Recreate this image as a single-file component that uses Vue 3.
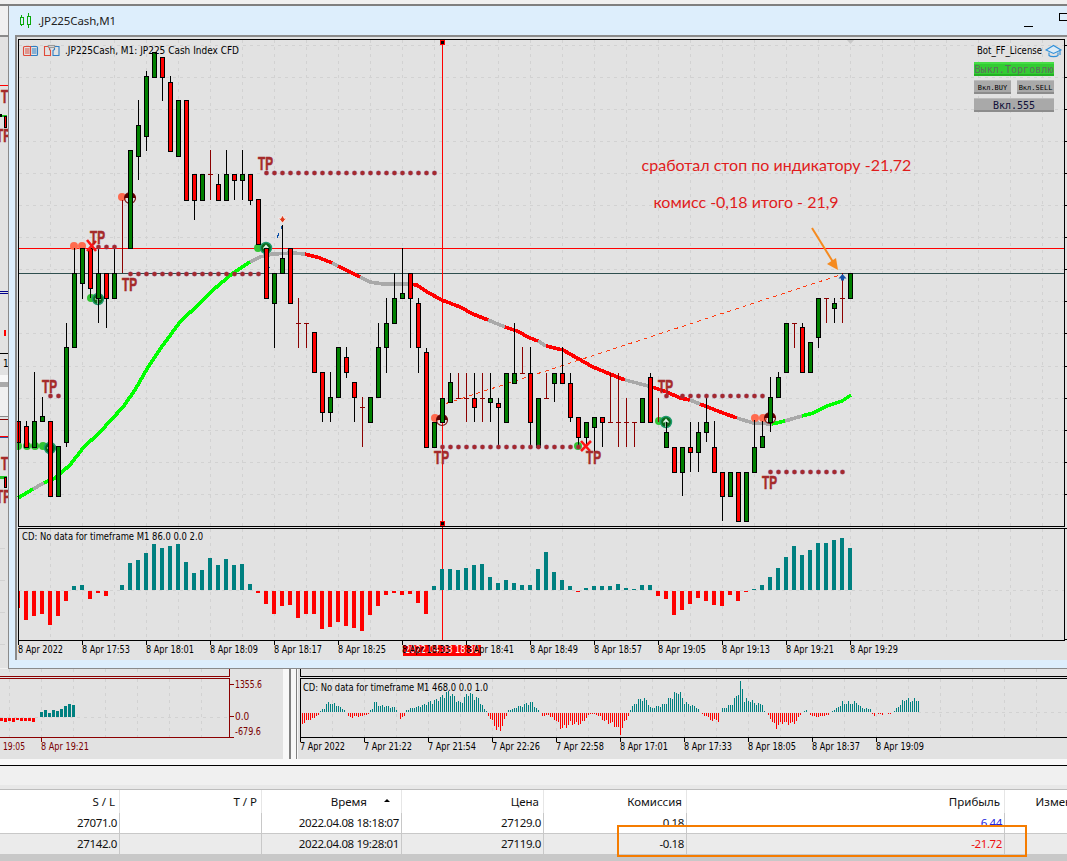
<script setup>
const G = 'g', R = 'r', D = 'd'
// [x, kind, bodyTop, bodyBottom, wickTop, wickBottom]  |  [x, 'd', top, bottom, crossY]
const candles = [
  [18,R,421,442,421,442],[26,R,426,447,421,447],[34,G,421,447,372,447],[42,G,416,421,397,421],
  [50,R,421,496],[58,G,446,496],[66,G,347,442,323,447],[74,G,273,347,248,347],[82,G,248,283,248,299],
  [90,R,248,288,248,298],[98,G,273,298,248,323],[106,R,273,298,273,328],[114,G,273,298,248,298],
  [122,D,200,273],[130,G,150,248],[138,G,125,156,100,180],[146,G,76,136,71,151],[154,G,52,77],
  [162,R,57,77,57,101],[170,R,82,151,76,151],[178,G,100,156],[186,R,100,200],[194,R,174,200,174,220],
  [202,G,174,200],[210,D,150,200,174],[218,R,184,200,174,200],[226,G,174,200,150,200],
  [234,R,174,180,174,200],[242,G,174,180,150,200],[250,R,174,200,174,205],[258,R,199,244],
  [266,R,248,298],[274,G,273,303,273,348],[282,G,258,273,225,273],[290,R,248,303],
  [298,D,298,348,323],[306,D,323,348,323],[314,R,332,372],[322,R,372,412,372,422],
  [330,G,397,412,372,422],[338,G,347,397],[346,R,357,372,347,378],[354,R,382,397,382,422],
  [362,D,397,447,407],[370,G,397,422],[378,G,347,397,323,397],[386,G,323,347,298,373],
  [394,G,298,323,273,323],[402,G,293,298,248,298],[410,R,273,298,273,348],[418,R,303,347,298,373],
  [426,R,352,447,348,447],[434,G,422,447],[442,G,398,422],[450,G,382,402,373,402],
  [458,D,373,398,398],[466,D,373,422,398],[474,R,398,407,373,422],[482,D,373,422,398],
  [490,G,398,402,373,422],[498,R,403,407,398,447],[506,G,373,422],[514,G,373,383,323,383],
  [522,D,347,373,373],[530,R,373,422,347,447],[538,G,398,447],[546,D,373,398,398],
  [554,G,373,383,373,402],[562,R,373,383,347,383],[570,R,383,417,373,422],[578,R,417,437,417,447],
  [586,G,422,437,422,447],[594,G,417,427,417,452],[602,R,417,422,417,447],[610,D,373,422,422],
  [618,D,373,447,422],[626,D,398,447,422],[634,D,422,447,422],[642,G,398,422],[650,R,377,422,373,422],
  [658,D,398,422],[666,G,432,447,422,447],[674,R,447,472],[682,G,447,472,447,496],
  [690,R,447,452,422,472],[698,G,432,452,422,472],[706,G,422,432,397,442],[714,R,447,472,421,472],
  [722,R,472,496,472,521],[730,G,472,496],[738,R,472,521],[746,G,472,521],[754,G,447,472,420,472],
  [762,G,436,447,421,447],[770,G,397,422,377,432],[778,G,377,397,372,397],[786,G,323,372],
  [794,D,323,348,323],[802,R,327,372,323,372],[810,G,342,372],[818,G,298,337,298,348],
  [826,D,298,323,298],[834,G,303,308,298,323],[842,D,273,323,298],[850,G,273,298]
].map(c => c[1] === D
  ? { x: c[0], kind: D, top: c[2], bottom: c[3], cross: c[4] }
  : { x: c[0], kind: c[1], top: c[2], bottom: c[3], wt: c[4] ?? c[2], wb: c[5] ?? c[3] })

const seg = (color, pts) => ({ color, pts: pts.map(p => p.join(',')).join(' ') })
const ma = [
  seg('#00ff00', [[18,498],[33,489]]),
  seg('#a9a9a9', [[33,489],[44,483]]),
  seg('#00ff00', [[44,483],[55,478],[70,465],[83,448],[100,432],[123,407],[135,390],[148,367],[163,345],[180,322],[200,303],[213,290],[233,273],[250,262]]),
  seg('#a9a9a9', [[250,262],[260,257],[273,254],[293,253],[305,254]]),
  seg('#ff0000', [[305,254],[320,258],[332,263]]),
  seg('#a9a9a9', [[332,263],[338,266]]),
  seg('#ff0000', [[338,266],[360,277]]),
  seg('#a9a9a9', [[360,277],[370,282],[383,284],[408,284]]),
  seg('#ff0000', [[408,284],[417,285],[427,292],[442,300],[460,307],[473,314],[488,320]]),
  seg('#a9a9a9', [[488,320],[505,327]]),
  seg('#ff0000', [[505,327],[517,331],[530,338],[538,341]]),
  seg('#a9a9a9', [[538,341],[546,346]]),
  seg('#ff0000', [[546,346],[563,350],[577,358],[593,367],[610,374],[625,380]]),
  seg('#a9a9a9', [[625,380],[637,383],[652,387]]),
  seg('#ff0000', [[652,387],[667,392],[680,398],[690,400]]),
  seg('#a9a9a9', [[690,400],[700,404]]),
  seg('#ff0000', [[700,404],[723,413],[737,418]]),
  seg('#a9a9a9', [[737,418],[753,423],[772,424]]),
  seg('#00ff00', [[772,424],[785,421]]),
  seg('#a9a9a9', [[785,421],[802,416]]),
  seg('#00ff00', [[802,416],[813,413],[827,406],[842,401],[851,395]])
]

const range = (a, b, s) => { const o = []; for (let v = a; v <= b; v += s) o.push(v); return o }
const dots = [
  ...range(266, 434, 8).map(x => [x, 173]),
  ...range(130, 258, 8).map(x => [x, 274]),
  [98, 247], [106, 247], [114, 247], [50, 396], [58, 396],
  ...range(442, 578, 8).map(x => [x, 447]),
  [666, 396], ...range(682, 762, 8).map(x => [x, 396]),
  ...range(770, 842, 8).map(x => [x, 472])
]
const tps = [[258,170],[90,244],[122,291],[42,393],[434,464],[586,464],[658,393],[762,489]]
const salmon = [[122,197],[74,246],[82,246],[435,418],[755,418],[763,418]]
const greens = [[258,248],[91,298],[18,446],[27,446],[35,446],[43,446],[578,446],[659,421]]

const gridX = range(18, 1050, 32).filter(x => x > 18)
const gridY = range(0, 14, 1).map(k => Math.round(45 + 32.05 * k))

const histMain = [
  -17,-29,-25,-23,-34,-25,-10,4,5,-8,-2,-5,0,5,27,30,37,46,42,44,46,28,17,20,32,25,31,25,26,6,-2,-13,-23,-15,-14,-27,-23,-23,-38,-36,-31,-35,-37,
  -40,-24,-15,-4,-2,-4,-3,-12,-23,4,21,21,20,22,25,26,13,7,10,7,5,5,21,38,18,10,4,-1,2,4,4,4,6,2,1,5,5,-5,-8,-24,-19,-13,-7,-10,-14,-15,-4,-10,-1,1,5,13,22,33,44,35,40,47,47,50,52,42
].map((v, i) => ({ x: 16 + 8 * i, v }))

const axis = [
  [18,'8 Apr 2022'],[82,'8 Apr 17:53'],[146,'8 Apr 18:01'],[210,'8 Apr 18:09'],[274,'8 Apr 18:17'],
  [338,'8 Apr 18:25'],[402,'8 Apr 18:33'],[466,'8 Apr 18:41'],[530,'8 Apr 18:49'],[594,'8 Apr 18:57'],
  [658,'8 Apr 19:05'],[722,'8 Apr 19:13'],[786,'8 Apr 19:21'],[850,'8 Apr 19:29']
]

const leftBars = [3,4,3,4,2,3,3,3,4].map((h, i) => ({ x: 0 + 4 * i, h }))
const leftTeal = [5,7,4,7,6,8,11,13,12].map((h, i) => ({ x: 40 + 4 * i, h }))

const envelope = [
  [302,-11],[304,-9],[308,-7],[312,-6],[316,-3],[318,-2],[320,1],[324,4],[326,8],[330,9],[336,7],[340,4],[344,2],[346,0],[348,-3],[352,-4],[356,-3],[360,-4],[364,-2],[367,-2],[369,1],[372,4],[374,10],[380,6],[386,6],[392,5],[396,3],[398,0],[399,-5],[403,-5],[405,0],[406,2],[412,4],[420,6],[428,9],[434,11],[442,15],[446,19],[450,19],[456,12],[460,9],[464,14],[468,19],[472,16],[478,13],[484,3],[487,0],[488,-3],[492,-8],[496,-16],[499,-18],[503,-10],[506,-3],[508,2],[512,3],[520,6],[526,8],[532,9],[536,4],[539,1],[541,-2],[545,-3],[548,-2],[552,-5],[556,-8],[560,-14],[564,-15],[570,-10],[576,-11],[582,-10],[587,-3],[590,-1],[595,-1],[599,-3],[604,-8],[610,-10],[616,-14],[620,-19],[624,-10],[628,-3],[630,2],[634,8],[640,13],[646,12],[650,4],[656,5],[664,8],[670,14],[678,21],[684,10],[690,7],[696,5],[699,1],[701,-1],[706,-3],[712,-8],[716,-6],[719,-11],[720,0],[721,3],[726,5],[732,8],[738,20],[741,30],[744,12],[750,11],[756,8],[762,8],[764,1],[768,-2],[772,-9],[776,-14],[782,-9],[790,-11],[796,-8],[799,-2],[801,-1],[803,1],[806,2],[808,0],[810,-2],[816,-4],[822,-3],[828,-2],[830,0],[832,1],[836,3],[842,9],[850,9],[856,10],[860,5],[864,3],[870,3],[871,0],[874,-3],[875,0],[882,-2],[883,0],[890,-1],[891,0],[895,2],[900,8],[905,13],[910,11],[916,12],[918,12]
]
const sample = x => {
  for (let i = 1; i < envelope.length; i++) {
    const [x0, v0] = envelope[i - 1], [x1, v1] = envelope[i]
    if (x <= x1) return v0 + (v1 - v0) * (x - x0) / (x1 - x0)
  }
  return 0
}
const miniBars = range(302, 918, 2).map((x, i) => {
  const v = sample(x) * (1 + 0.18 * Math.sin(i * 2.1))
  return { x, v: Math.round(v) }
}).filter(b => b.v !== 0)
const miniAxis = [[300,'7 Apr 2022'],[364,'7 Apr 21:22'],[428,'7 Apr 21:54'],[492,'7 Apr 22:26'],[556,'7 Apr 22:58'],[620,'8 Apr 17:01'],[684,'8 Apr 17:33'],[748,'8 Apr 18:05'],[812,'8 Apr 18:37'],[876,'8 Apr 19:09']]
const labelWidth = s => s.endsWith('2022') ? 45 : 48
const rows = [
  { sl: '27071.0', time: '2022.04.08 18:18:07', price: '27129.0', fee: '0.18', profit: '6.44', cls: 'blue', alt: false, extra: '' },
  { sl: '27142.0', time: '2022.04.08 19:28:01', price: '27119.0', fee: '-0.18', profit: '-21.72', cls: 'red', alt: true, extra: '-4.96' }
]
const stripTpTop = [[1,103],[-4,142]]
const stripTpBottom = [[1,470],[-4,503]]
</script>

<template>
  <div class="app">
    <div class="topstrip"></div>

    <div class="main-row">
      <svg class="strip" width="8" height="663" viewBox="0 6 8 663">
        <rect x="0" y="6" width="8" height="31" fill="#f0f0f0" />
        <rect x="0" y="35" width="8" height="2" fill="#8a8a8a" />
        <rect x="0" y="37" width="8" height="338" fill="#e2e2e2" />
        <rect x="0" y="85" width="8" height="1" fill="#ff0000" />
        <text v-for="t in stripTpTop" :key="t[1]" :x="t[0]" :y="t[1]" class="tp" textLength="15" lengthAdjust="spacingAndGlyphs">TP</text>
        <rect x="0" y="115" width="7" height="2" fill="#22c522" />
        <rect x="0" y="114" width="2" height="3" fill="#000" />
        <rect x="4.500" y="116.500" width="2" height="11" fill="#ff0000" stroke="#000" />
        <rect x="0" y="291" width="8" height="1" fill="#00008b" />
        <rect x="0" y="293" width="8" height="1" fill="#00008b" />
        <rect x="4" y="330" width="2" height="6" fill="#ff0000" />
        <rect x="0" y="353" width="8" height="1" fill="#000" />
        <text x="3" y="367" class="ax">1</text>
        <rect x="0" y="375" width="8" height="7" fill="#f8f8f8" />
        <rect x="0" y="382" width="8" height="5" fill="#aaaaaa" />
        <rect x="0" y="387" width="8" height="29" fill="#f0f0f0" />
        <rect x="0" y="416" width="8" height="1" fill="#8a8a8a" />
        <rect x="0" y="417" width="8" height="251" fill="#e2e2e2" />
        <rect x="0" y="419" width="8" height="1" fill="#8b0000" />
        <rect x="0" y="436" width="8" height="1" fill="#ff0000" />
        <rect x="0" y="437" width="8" height="1" fill="#2f4fa0" />
        <text v-for="t in stripTpBottom" :key="t[1]" :x="t[0]" :y="t[1]" class="tp" textLength="15" lengthAdjust="spacingAndGlyphs">TP</text>
        <rect x="0" y="476" width="7" height="3" fill="#22c522" />
        <rect x="4.500" y="477.500" width="2" height="10" fill="#ff0000" stroke="#000" />
        <rect v-for="y in [548,580,612,644]" :key="y" x="0" :y="y" width="5" height="1" fill="#d2d2d2" />
      </svg>

      <section class="window">
        <header class="titlebar">
          <svg class="title-icon" width="12" height="15" viewBox="0 0 12 15" shape-rendering="crispEdges">
            <rect x="1" y="2" width="1" height="11" fill="#0aa80a" />
            <rect x="0" y="4" width="3" height="7" fill="#ddeefc" stroke="#0aa80a" transform="translate(.5 .5)" />
            <rect x="8" y="0" width="1" height="15" fill="#0aa80a" />
            <rect x="7" y="3" width="3" height="8" fill="#ddeefc" stroke="#0aa80a" transform="translate(.5 .5)" />
          </svg>
          <span class="title-text">.JP225Cash,M1</span>
          <span class="win-min"></span>
          <span class="win-max"></span>
        </header>

        <div class="chart-outer">
          <svg class="chart" width="1050" height="623" viewBox="17 37 1050 623">
            <rect x="17" y="37" width="1050" height="623" fill="#e2e2e2" />
            <g shape-rendering="crispEdges">
              <line v-for="x in gridX" :key="'gx'+x" :x1="x+.5" y1="40" :x2="x+.5" y2="526" class="grid" />
              <line v-for="x in gridX" :key="'sx'+x" :x1="x+.5" y1="529" :x2="x+.5" y2="640" class="grid" />
              <line v-for="y in gridY" :key="'gy'+y" x1="19" :y1="y+.5" x2="1064" :y2="y+.5" class="grid" />
              <line x1="19" y1="590.5" x2="1064" y2="590.5" class="grid" />
              <rect v-for="y in gridY" :key="'t'+y" x="1065" :y="y" width="2" height="1" fill="#000" />
              <rect x="1065" y="639" width="2" height="1" fill="#000" />
              <rect x="1065" y="528" width="2" height="1" fill="#000" />
            </g>
            <polygon points="847,40 854,40 850.5,44" fill="#c8c8c8" />

            <!-- price lines -->
            <g shape-rendering="crispEdges">
              <rect x="18" y="248" width="1046" height="1" fill="#ff0000" />
              <rect x="18" y="273" width="1046" height="1" fill="#2f4f4f" />
              <rect x="442" y="39" width="1" height="601" fill="#ff0000" />
            </g>
            <polyline v-for="(m, i) in ma" :key="'m'+i" :points="m.pts" fill="none" :stroke="m.color" stroke-width="3.6" shape-rendering="crispEdges" />
            <line x1="446" y1="403.5" x2="840" y2="275" class="trade" shape-rendering="crispEdges" />
            <rect x="439" y="400" width="3" height="2" fill="#fff" />
            <path d="M267 268l3-1M277 238l2-5M281 229l1-3" stroke="#0a4fa8" stroke-width="1" fill="none" shape-rendering="crispEdges" />
            <path d="M264 268l3-3 3 3z" fill="#0a4fa8" />

            <!-- trade markers, painted under the candles -->
            <circle v-for="(s, i) in salmon" :key="'sa'+i" :cx="s[0]" :cy="s[1]" r="4" fill="#ff6a4e" />
            <circle v-for="(g, i) in greens" :key="'gr'+i" :cx="g[0]" :cy="g[1]" r="4" fill="#33c433" />
            <g v-for="p in [[130,198],[442,420],[770,418]]" :key="'o'+p[0]">
              <circle :cx="p[0]" :cy="p[1]" r="5.5" fill="none" stroke="#7a1010" stroke-width="1.2" />
              <path :d="`M${p[0]-5.500} ${p[1]}a5.500 5.500 0 0 1 11 0z`" fill="#5a0000" />
            </g>
            <g v-for="p in [[266,248],[98,299],[50,448],[666,422]]" :key="'u'+p[0]">
              <circle :cx="p[0]" :cy="p[1]" r="5.5" fill="#0c6b1a" stroke="#1c9a6c" stroke-width="1.4" />
              <path :d="`M${p[0]} ${p[1]+5}v-7m-2.5 2.5l2.5-3 2.5 3`" stroke="#e8f6f0" stroke-width="1.2" fill="none" />
            </g>

            <!-- candles -->
            <g shape-rendering="crispEdges">
              <template v-for="c in candles" :key="c.x">
                <template v-if="c.kind === 'd'">
                  <rect :x="c.x" :y="c.top" width="1" :height="c.bottom - c.top" fill="#8b0000" />
                  <rect v-if="c.cross" :x="c.x - 2" :y="c.cross" width="5" height="1" fill="#8b0000" />
                </template>
                <template v-else>
                  <rect :x="c.x" :y="c.wt" width="1" :height="c.wb - c.wt" fill="#000" />
                  <rect :x="c.x - 1.5" :y="c.top + .5" width="4" :height="c.bottom - c.top" :fill="c.kind === 'g' ? '#008000' : '#ff0000'" stroke="#000" />
                </template>
              </template>
            </g>

            <path d="M87 240l9 11M96 241l-9 10" stroke="#ff1414" stroke-width="2.6" fill="none" />
            <path d="M581 441l9 10M591 441l-10 10" stroke="#ff1414" stroke-width="2.6" fill="none" />
            <circle v-for="(d, i) in dots" :key="'d'+i" :cx="d[0]+.5" :cy="d[1]" r="2.3" fill="#a52a2a" stroke="#8a4a9a" stroke-opacity=".35" stroke-width=".8" />
            <text v-for="t in tps" :key="'tp'+t[0]" :x="t[0]" :y="t[1]" class="tp" textLength="15" lengthAdjust="spacingAndGlyphs">TP</text>
            <path d="M282.5 215l4 5-2.3-.4-1.7 3.4-1.7-3.4-2.3.4z" fill="#e03a1a" stroke="#fff" stroke-width=".7" transform="rotate(180 282.5 219)" />
            <path d="M842.5 274l4 4.5h-2.5v2h-3v-2h-2.5z" fill="#1450a8" />

            <!-- sub-window histogram -->
            <g shape-rendering="crispEdges">
              <rect v-for="b in histMain.filter(b => b.v > 0)" :key="'hp'+b.x" :x="b.x" :y="590 - b.v" width="4" :height="b.v" fill="#008080" />
              <rect v-for="b in histMain.filter(b => b.v < 0)" :key="'hn'+b.x" :x="Math.max(b.x, 18)" y="591" :width="b.x < 18 ? 2 : 4" :height="-b.v" fill="#ff0000" />
            </g>

            <!-- frames -->
            <g shape-rendering="crispEdges" fill="none" stroke="#000">
              <rect x="18.5" y="39.5" width="1046" height="487" />
              <rect x="18.5" y="528.5" width="1046" height="112" />
            </g>
            <g shape-rendering="crispEdges">
              <rect x="440" y="40" width="5" height="5" fill="#ff0000" />
              <rect x="441" y="41" width="3" height="3" fill="#000" />
              <rect x="440" y="521" width="5" height="5" fill="#ff0000" />
              <rect x="441" y="522" width="3" height="3" fill="#000" />
            </g>

            <!-- captions -->
            <g fill="none" stroke-width="1.1">
              <path d="M30.500 46.500h6a1 1 0 0 1 1 1v7a1 1 0 0 1-1 1h-6z" stroke="#2f7ec4" />
              <path d="M30.500 46.500h-6a1 1 0 0 0-1 1v7a1 1 0 0 0 1 1h6z" stroke="#e04a3a" />
              <path d="M25 49h4.500M25 51h4.500M25 53h4.500" stroke="#e04a3a" />
              <path d="M32 49h4.500M32 51h4.500M32 53h4.500" stroke="#2f7ec4" />
              <path d="M44.500 46.500h5v3l1 1v5h-6z" stroke="#e04a3a" />
              <path d="M54.500 46.500h4.500v9h-6v-5l1.500-1z" stroke="#2f7ec4" />
              <rect x="48.500" y="45.500" width="6" height="2" stroke="#9a9a9a" fill="#ddd" />
            </g>
            <text x="65" y="54" class="ax" textLength="174" lengthAdjust="spacingAndGlyphs">.JP225Cash, M1:  JP225 Cash Index CFD</text>
            <text x="22" y="540" class="ax" textLength="181" lengthAdjust="spacingAndGlyphs">CD: No data for timeframe M1 86.0 0.0 2.0</text>

            <text x="977" y="54" class="ax" textLength="65" lengthAdjust="spacingAndGlyphs">Bot_FF_License</text>
            <g fill="none" stroke="#2f8fd8" stroke-width="1.1">
              <path d="M1046 50l7.500-4.500 7.500 4.500-7.500 3.500z" fill="#dcecf8" />
              <path d="M1049 52.500v3c1.500 1.500 7.500 1.500 9 0v-3" />
              <path d="M1060 50.500v4.500" />
            </g>

            <g shape-rendering="crispEdges">
              <rect x="974" y="62" width="80" height="14" fill="#33cc33" />
              <rect x="974" y="62" width="80" height="2" fill="#45dd45" />
              <rect x="974" y="74" width="80" height="2" fill="#22b222" />
              <rect x="974" y="80" width="37" height="14" fill="#a9a9a9" />
              <rect x="974" y="80" width="37" height="1" fill="#bcbcbc" />
              <rect x="974" y="92" width="37" height="2" fill="#8c8c8c" />
              <rect x="1017" y="80" width="37" height="14" fill="#a9a9a9" />
              <rect x="1017" y="92" width="37" height="2" fill="#8c8c8c" />
              <rect x="1017" y="80" width="37" height="1" fill="#bcbcbc" />
              <rect x="974" y="98" width="80" height="14" fill="#a9a9a9" />
              <rect x="974" y="98" width="80" height="1" fill="#bcbcbc" />
              <rect x="974" y="110" width="80" height="2" fill="#8c8c8c" />
            </g>
            <text x="974.500" y="73" class="btn btn-off" textLength="79" lengthAdjust="spacingAndGlyphs">Выкл.Торговлю</text>
            <text x="992.500" y="90" class="btn btn-s" text-anchor="middle">Вкл.BUY</text>
            <text x="1035.500" y="90" class="btn btn-s" text-anchor="middle">Вкл.SELL</text>
            <text x="1014" y="109" class="btn btn-m" text-anchor="middle">Вкл.555</text>

            <text x="776.500" y="171" class="note" text-anchor="middle">сработал стоп по индикатору -21,72</text>
            <text x="746" y="208" class="note" text-anchor="middle">комисс -0,18 итого - 21,9</text>
            <line x1="812" y1="228" x2="833" y2="262" stroke="#f58a1f" stroke-width="2" />
            <polygon points="838,270 827,264 836,258" fill="#f58a1f" />

            <!-- time axis -->
            <g shape-rendering="crispEdges">
              <rect v-for="a in axis" :key="'tk'+a[0]" :x="a[0]" y="641" width="1" height="4" fill="#000" />
              <rect x="403" y="645" width="78" height="11" fill="#ff0000" />
            </g>
            <text x="405" y="653" class="ax ax-white" textLength="74" lengthAdjust="spacingAndGlyphs">2022.04.08 18:30</text>
            <text v-for="a in axis" :key="'al'+a[0]" :x="a[0]" y="653" class="ax" :textLength="labelWidth(a[1])" lengthAdjust="spacingAndGlyphs">{{ a[1] }}</text>
          </svg>
        </div>
      </section>
    </div>

    <div class="panels">
      <svg class="panel-a" width="283" height="90" viewBox="0 669 283 90">
        <rect x="0" y="669" width="283" height="90" fill="#e2e2e2" />
        <g shape-rendering="crispEdges">
          <line v-for="x in [9,41,73,105,137,169,201]" :key="'pa'+x" :x1="x+.5" y1="669" :x2="x+.5" y2="676" class="grid" />
          <line v-for="x in [9,41,73,105,137,169,201]" :key="'pb'+x" :x1="x+.5" y1="679" :x2="x+.5" y2="737" class="grid" />
          <line x1="0" y1="717.500" x2="229" y2="717.500" class="grid" />
          <rect v-for="b in leftBars" :key="'lr'+b.x" :x="b.x" y="718" width="3" :height="b.h" fill="#ff0000" />
          <rect v-for="b in leftTeal" :key="'lt'+b.x" :x="b.x" :y="717 - b.h" width="3" :height="b.h" fill="#008080" />
          <rect x="0" y="676" width="230" height="1" fill="#8b0000" />
          <rect x="0" y="678" width="230" height="1" fill="#8b0000" />
          <rect x="0" y="737" width="230" height="1" fill="#8b0000" />
          <rect x="229" y="669" width="1" height="8" fill="#8b0000" />
          <rect x="229" y="678" width="1" height="60" fill="#8b0000" />
          <rect v-for="y in [684,716,737]" :key="'lk'+y" x="230" :y="y" width="4" height="1" fill="#8b0000" />
          <rect x="41" y="738" width="1" height="4" fill="#8b0000" />
        </g>
        <text x="235" y="688" class="ax ax-red" textLength="27" lengthAdjust="spacingAndGlyphs">1355.6</text>
        <text x="235" y="720" class="ax ax-red">0.0</text>
        <text x="235" y="735" class="ax ax-red" textLength="26" lengthAdjust="spacingAndGlyphs">-679.6</text>
        <text x="3" y="750" class="ax ax-red" textLength="22" lengthAdjust="spacingAndGlyphs">19:05</text>
        <text x="41" y="750" class="ax ax-red" textLength="48" lengthAdjust="spacingAndGlyphs">8 Apr 19:21</text>
      </svg>
      <div class="splitter"><i></i><b></b></div>
      <svg class="panel-b" width="769" height="90" viewBox="298 669 769 90">
        <rect x="298" y="669" width="769" height="90" fill="#e2e2e2" />
        <g shape-rendering="crispEdges">
          <line v-for="x in range(332, 1060, 32)" :key="'ra'+x" :x1="x+.5" y1="669" :x2="x+.5" y2="676" class="grid" />
          <line v-for="x in range(332, 1060, 32)" :key="'rb'+x" :x1="x+.5" y1="679" :x2="x+.5" y2="737" class="grid" />
          <line x1="918" y1="712.500" x2="1067" y2="712.500" class="grid" />
          <template v-for="b in miniBars" :key="'mb'+b.x">
            <rect v-if="b.v > 0" :x="b.x" :y="712 - b.v" width="1" :height="b.v" fill="#008080" />
            <rect v-else :x="b.x" y="713" width="1" :height="-b.v" fill="#ff0000" />
          </template>
          <rect x="300" y="669" width="1" height="8" fill="#000" />
          <rect x="300" y="676" width="767" height="1" fill="#000" />
          <rect x="300" y="678" width="767" height="1" fill="#000" />
          <rect x="300" y="678" width="1" height="60" fill="#000" />
          <rect x="300" y="737" width="767" height="1" fill="#000" />
          <rect v-for="a in miniAxis" :key="'mk'+a[0]" :x="a[0]" y="738" width="1" height="4" fill="#000" />
        </g>
        <text x="303" y="691" class="ax" textLength="185" lengthAdjust="spacingAndGlyphs">CD: No data for timeframe M1 468.0 0.0 1.0</text>
        <text v-for="a in miniAxis" :key="'ma'+a[0]" :x="a[0]" y="750" class="ax" :textLength="labelWidth(a[1])" lengthAdjust="spacingAndGlyphs">{{ a[1] }}</text>
      </svg>
    </div>

    <div class="sep"></div>
    <div class="toolbar"></div>

    <div class="table">
      <div class="row head">
        <div class="cell">S / L</div>
        <div class="cell">T / P</div>
        <div class="cell time-head">Время<span class="sort"></span></div>
        <div class="cell">Цена</div>
        <div class="cell">Комиссия</div>
        <div class="cell profit-head">Прибыль</div>
        <div class="cell last">Изменение</div>
      </div>
      <div v-for="r in rows" :key="r.time" class="row body" :class="{ alt: r.alt }">
        <div class="cell">{{ r.sl }}</div>
        <div class="cell"></div>
        <div class="cell">{{ r.time }}</div>
        <div class="cell">{{ r.price }}</div>
        <div class="cell">{{ r.fee }}</div>
        <div class="cell" :class="r.cls">{{ r.profit }}</div>
        <div class="cell last red">{{ r.extra }}</div>
      </div>
      <div class="row total">
        <div class="cell"></div><div class="cell"></div><div class="cell"></div><div class="cell"></div>
        <div class="cell">3.98</div>
        <div class="cell">75.86</div>
        <div class="cell last"></div>
      </div>
      <div class="highlight"></div>
    </div>
  </div>
</template>

<style>
html, body { margin: 0; background: #f0f0f0; overflow: hidden; }
</style>

<style scoped>
.app {
  width: 1067px;
  height: 861px;
  overflow: hidden;
  background: #f0f0f0;
  display: flex;
  flex-direction: column;
  font-family: "Noto Sans", "Liberation Sans", sans-serif;
}
.topstrip { height: 4px; flex: none; border-bottom: 2px solid #7f7f7f; background: #f0f0f0; }
.main-row { display: flex; height: 663px; flex: none; }
.strip { display: block; flex: none; }
.window {
  flex: 1;
  min-width: 0;
  box-sizing: border-box;
  background: #ddeefc;
  border-left: 1px solid #8a8a8a;
  border-bottom: 1px solid #8a8a8a;
  display: flex;
  flex-direction: column;
}
.titlebar { height: 29px; flex: none; display: flex; align-items: center; padding-left: 11px; position: relative; }
.title-icon { flex: none; margin-right: 6px; }
.title-text { font-size: 11.500px; color: #222; letter-spacing: -.1px; }
.win-min { width: 9px; height: 1px; background: #000; margin-left: auto; margin-top: 11px; }
.win-max {
  width: 9px; height: 8px; box-sizing: border-box; border: 1px solid #000; background: #ddeefc;
  margin-left: 26px; margin-top: -7px; margin-right: -1px;
}
.chart-outer {
  margin-left: 6px;
  border-left: 2px solid #8a8a8a;
  border-top: 2px solid #8a8a8a;
  flex: none;
  height: 623px;
}
.chart { display: block; }
.grid { stroke: #d2d2d2; stroke-width: 1; stroke-dasharray: 3 4; }
.trade { stroke: #ff3c12; stroke-width: 1; stroke-dasharray: 4 4; }
.tp { font-family: "Liberation Sans", sans-serif; font-weight: 700; font-size: 18px; fill: #a52a2a; stroke: #a52a2a; stroke-width: .6px; }
.ax { font-family: "DejaVu Sans", "Noto Sans", sans-serif; font-stretch: condensed; font-size: 10px; fill: #000; white-space: pre; }
.ax-white { fill: #fff; }
.ax-red { fill: #7a0000; }
.note { font-family: Lato, "Open Sans", sans-serif; font-size: 16px; fill: #e01c1c; }
.btn { font-family: "DejaVu Sans Mono", "Liberation Mono", monospace; }
.btn-off { font-size: 10.500px; fill: #5e6e5e; }
.btn-s { font-size: 7px; fill: #000; }
.btn-m { font-size: 10px; fill: #10103a; }

.panels { display: flex; height: 90px; flex: none; }
.panel-a, .panel-b { display: block; flex: none; }
.splitter { width: 15px; flex: none; background: #f8f8f8; display: flex; height: 93px; padding-left: 6px; box-sizing: border-box; }
.splitter i { width: 2px; background: #808080; display: block; }
.splitter b { width: 1.500px; background: #808080; display: block; margin-left: 4.500px; }
.sep { height: 6px; flex: none; background: #f8f8f8; border-bottom: 1px solid #000; box-sizing: content-box; }
.toolbar { height: 19px; flex: none; background: #f0f0f0; border-bottom: 4px solid #e8e8e8; box-shadow: 0 1px 0 #bdbdbd; }

.table { position: relative; background: #fff; margin-top: 1px; font-size: 11.500px; color: #111; flex: none; }
.row {
  display: grid;
  grid-template-columns: 120px 142px 140px 142px 143px 318px 98px;
  width: 1103px;
}
.cell {
  box-sizing: border-box;
  text-align: right;
  padding-right: 2px;
  white-space: nowrap;
  overflow: hidden;
  letter-spacing: -.38px;
  border-right: 1px solid #c8c8c8;
}
.head { height: 23px; line-height: 23px; }
.head .cell { border-right-color: #e6e6e6; padding-right: 4px; color: #111; letter-spacing: 0; }
.head .profit-head { padding-right: 4px; }
.body { height: 20px; line-height: 19px; border-top: 1px solid #c8c8c8; box-sizing: border-box; }
.head + .body { border-top: none; height: 20px; }
.body.alt { background: #ebebeb; height: 21px; }
.total { background: #c8c8c8; height: 30px; line-height: 18px; padding-top: 4px; }
.total .cell { border-right: none; }
.last { border-right: none !important; }
.body .last { padding-right: 9px; }
.time-head { padding-right: 34px !important; position: relative; }
.sort {
  position: absolute; right: 11px; top: 9px;
  width: 0; height: 0;
  border-left: 3px solid transparent; border-right: 3px solid transparent; border-bottom: 3px solid #000;
}
.blue { color: #2222dd; }
.red { color: #ee1111; }
.highlight {
  position: absolute;
  left: 617px;
  top: 35px;
  width: 410px;
  height: 32px;
  box-sizing: border-box;
  border: 2px solid #f57c00;
}
</style>
